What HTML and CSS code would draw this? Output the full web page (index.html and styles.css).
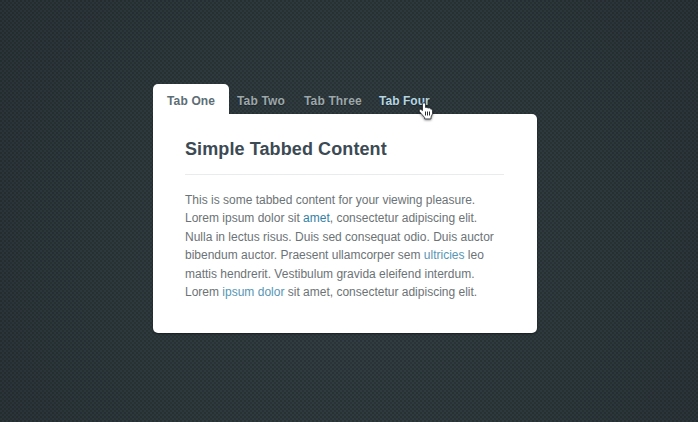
FILE: index.html
```
<!DOCTYPE html>
<html lang="en">
<head>
<meta charset="utf-8">
<title>Simple Tabbed Content</title>
<link rel="stylesheet" href="styles.css">
</head>
<body>
<main class="tabbed">
  <nav class="tabs">
    <a class="tab active">Tab One</a>
    <a class="tab two">Tab Two</a>
    <a class="tab three">Tab Three</a>
    <a class="tab hover">Tab Four
      <svg class="pointer" width="17" height="19" viewBox="0 0 17 19">
        <path d="M4.5 2.2Q4.5 .7 6 .7T7.5 2.2V5.5Q9.2 4.9 10 6Q11.7 5.4 12.4 6.8Q14.5 6.5 14.5 8.8V11.7L13 15V16.9H6.6V15.5L3.3 11.7L1.2 9.2Q.8 7.2 2.8 7.3L4.5 8.6Z" fill="#fff" stroke="#11191d" stroke-width=".7"/>
        <path d="M7.5 9.5V13.5M9.5 9.5V13.5M11.5 9.5V13.5" fill="none" stroke="#11191d" stroke-width=".9"/>
      </svg>
    </a>
  </nav>
  <section class="panel">
    <h1>Simple Tabbed Content</h1>
    <p>This is some tabbed content for your viewing pleasure.<br>
    Lorem ipsum dolor sit <a class="strong">amet</a>, consectetur adipiscing elit.<br>
    Nulla in lectus risus. Duis sed consequat odio. Duis auctor<br>
    bibendum auctor. Praesent ullamcorper sem <a>ultricies</a> leo<br>
    mattis hendrerit. Vestibulum gravida eleifend interdum.<br>
    Lorem <a>ipsum dolor</a> sit amet, consectetur adipiscing elit.</p>
  </section>
</main>
</body>
</html>
```
FILE: styles.css
```
* { box-sizing: border-box; }
body {
  margin: 0;
  height: 422px;
  overflow: hidden;
  padding: 84px 0 0 153px;
  font-family: "Liberation Sans", Arial, sans-serif;
  font-size: 12px;
  background:
    conic-gradient(from 0deg at 2px 2px, transparent 75%, rgba(0,0,0,.16) 0) 0 0 / 4px 4px,
    conic-gradient(from 0deg at 2px 2px, transparent 75%, rgba(0,0,0,.13) 0) 2px 2px / 4px 4px,
    radial-gradient(circle at 350px 240px, #333f44 0, #2c373b 290px, #2a3337 420px);
}
.tabbed { width: 384px; }
.tabs { display: flex; height: 30px; }
.tab {
  position: relative;
  font-weight: bold;
  line-height: 34px;
  letter-spacing: .15px;
  white-space: nowrap;
  color: #9da7aa;
  text-shadow: 0 1px 1px rgba(0,0,0,.35);
}
.active {
  width: 76px;
  padding-left: 14px;
  color: #5c6d75;
  background: #fff;
  border-radius: 5px 5px 0 0;
  text-shadow: none;
}
.two { width: 67px; margin-left: 8px; }
.three { width: 75px; }
.hover { color: #b5d5e2; letter-spacing: .05px; }
.pointer {
  position: absolute;
  left: 39px;
  top: 18px;
  z-index: 1;
  filter: drop-shadow(0 1px 1px rgba(0,0,0,.5));
}
.panel {
  height: 219px;
  padding: 24px 33px 0 32px;
  background: #fff;
  border-radius: 0 5px 5px 5px;
  box-shadow: 0 1px 2px rgba(0,0,0,.45);
}
h1 {
  margin: 0 0 16px;
  height: 37px;
  border-bottom: 1px solid #e9ebec;
  font-size: 18px;
  line-height: 22px;
  letter-spacing: .1px;
  color: #3c4a54;
}
p { margin: 0; line-height: 18.4px; white-space: nowrap; color: #6c7376; }
p a { color: #5796b5; }
p .strong { color: #3280a6; }
```
